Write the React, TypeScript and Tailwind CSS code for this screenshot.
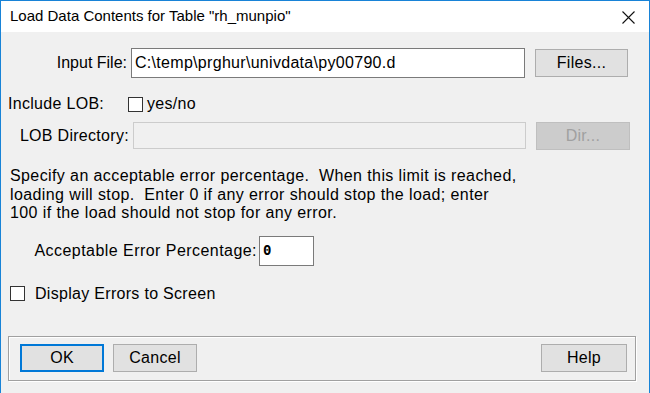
const font = { fontFamily: '"Liberation Sans", Arial, sans-serif' }

const Button = ({
    label,
    width,
    focused = false,
    disabled = false,
}: {
    label: string
    width: string
    focused?: boolean
    disabled?: boolean
}) => (
    <button
        className={
            width +
            ' flex h-[28px] items-center justify-center text-[16px] tracking-[0.3px] ' +
            (disabled
                ? 'border border-[#bfbfbf] bg-[#cccccc] text-[#a0a0a0]'
                : focused
                  ? 'border-2 border-[#0078d7] bg-[#e1e1e1] text-black'
                  : 'border border-[#adadad] bg-[#e1e1e1] text-black')
        }
    >
        {label}
    </button>
)

const Checkbox = () => (
    <span className="inline-block h-[15px] w-[15px] shrink-0 border border-[#333333] bg-white" />
)

export default function App() {
    return (
        <div
            className="flex h-[393px] w-[650px] flex-col border-x border-t border-[#1883d7] bg-[#f0f0f0] text-black"
            style={font}
        >
            <div className="flex h-[31px] shrink-0 items-center justify-between bg-white pl-[9px] pr-[14px]">
                <span className="text-[15px]">Load Data Contents for Table "rh_munpio"</span>
                <svg width="13" height="13" viewBox="0 0 13 13" className="mt-[2px]">
                    <path d="M0.5 0.5 L12.5 12.5 M12.5 0.5 L0.5 12.5" stroke="#111" strokeWidth="1.1" />
                </svg>
            </div>

            <div className="flex flex-1 flex-col text-[16px] tracking-[0.3px]">
                {/* input file */}
                <div className="mt-[16px] flex h-[30px] items-center">
                    <div className="w-[126px] text-right tracking-normal">Input File:</div>
                    <div className="ml-[4px] flex h-[30px] w-[394px] items-center border border-[#7a7a7a] bg-white pl-[3px]">
                        C:\temp\prghur\univdata\py00790.d
                    </div>
                    <div className="ml-[10px]">
                        <Button label="Files..." width="w-[93px]" />
                    </div>
                </div>

                {/* include lob */}
                <div className="mt-[16px] flex h-[20px] items-center">
                    <div className="w-[120px] pl-[7px]">Include LOB:</div>
                    <div className="ml-[7px] flex items-center gap-[4px]">
                        <Checkbox />
                        <span>yes/no</span>
                    </div>
                </div>

                {/* lob directory */}
                <div className="mt-[8px] flex h-[27px] items-center">
                    <div className="w-[128px] text-right">LOB Directory:</div>
                    <div className="ml-[4px] h-[27px] w-[393px] border border-[#cccccc] bg-[#f0f0f0]" />
                    <div className="ml-[10px]">
                        <Button label="Dir..." width="w-[94px]" disabled />
                    </div>
                </div>

                {/* description */}
                <p className="mt-[18px] pl-[9px] leading-[18.5px] tracking-[0.4px]">
                    Specify an acceptable error percentage.&nbsp; When this limit is reached,
                    <br />
                    loading will stop.&nbsp; Enter 0 if any error should stop the load; enter
                    <br />
                    100 if the load should not stop for any error.
                </p>

                {/* error percentage */}
                <div className="mt-[13px] flex h-[30px] items-center">
                    <div className="w-[256px] text-right tracking-[0.45px]">Acceptable Error Percentage:</div>
                    <div
                        className="ml-[2px] flex h-[30px] w-[55px] items-center border border-[#7a7a7a] bg-white pl-[3px] text-[14px] font-bold tracking-normal"
                        style={{ fontFamily: '"DejaVu Sans Mono", monospace' }}
                    >
                        0
                    </div>
                </div>

                {/* display errors */}
                <div className="mt-[18px] flex h-[20px] items-center pl-[9px]">
                    <Checkbox />
                    <span className="ml-[10px]">Display Errors to Screen</span>
                </div>

                {/* button group */}
                <div className="ml-[7px] mt-[32px] flex h-[45px] w-[628px] items-center justify-between border border-[#a0a0a0] pl-[11px] pr-[8px] shadow-[inset_1px_1px_0_#ffffff,1px_1px_0_#ffffff]">
                    <div className="flex gap-[9px]">
                        <Button label="OK" width="w-[84px]" focused />
                        <Button label="Cancel" width="w-[84px]" />
                    </div>
                    <Button label="Help" width="w-[86px]" />
                </div>
            </div>
        </div>
    )
}
